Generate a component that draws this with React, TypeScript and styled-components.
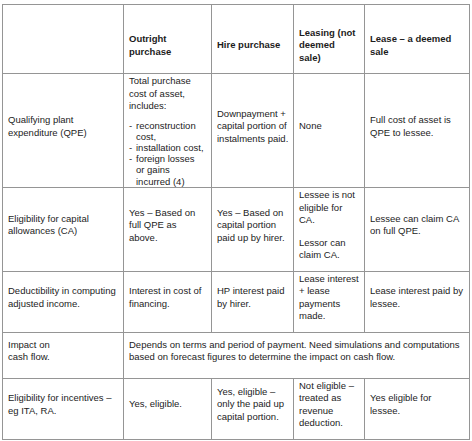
import styled, { createGlobalStyle } from "styled-components";
import type { ReactNode } from "react";

const Global = createGlobalStyle`
    html, body {
        margin: 0;
        padding: 0;
        background: #ffffff;
    }
    body {
        font-family: "Liberation Sans", Arial, sans-serif;
        color: #1c1c1c;
    }
`;

const Page = styled.div`
    padding: 4px 0 0 2px;
`;

const Table = styled.table`
    width: 467px;
    table-layout: fixed;
    border-collapse: collapse;
    font-size: 9.5px;
    line-height: 12.5px;
    white-space: nowrap;
`;

const Row = styled.tr<{ $h: number }>`
    height: ${(p) => p.$h}px;
`;

const HeadCell = styled.th`
    border: 1px solid #959595;
    padding: 14px 5px 1px;
    text-align: left;
    vertical-align: middle;
    font-weight: 700;
`;

const Cell = styled.td<{ $top?: boolean }>`
    border: 1px solid #959595;
    padding: ${(p) => (p.$top ? "1px 5px 0" : "1px 5px 9px")};
    vertical-align: ${(p) => (p.$top ? "top" : "middle")};
`;

const Para = styled.p<{ $gap?: number }>`
    margin: 0 0 ${(p) => p.$gap ?? 0}px;
`;

const DashList = styled.ul`
    list-style: none;
    margin: 0;
    padding: 0;
    line-height: 11.2px;
`;

const DashItem = styled.li`
    display: flex;
    gap: 4px;

    &::before {
        content: "-";
        width: 3px;
        flex: none;
    }
`;

const lines = (...parts: string[]): ReactNode =>
    parts.map((t, i) => (
        <span key={i}>
            {i > 0 && <br />}
            {t}
        </span>
    ));

const widths = [121, 88, 82, 71, 105];

export default function App() {
    return (
        <Page>
            <Global />
            <Table>
                <colgroup>
                    {widths.map((w, i) => (
                        <col key={i} style={{ width: w }} />
                    ))}
                </colgroup>
                <tbody>
                    <Row $h={69}>
                        <HeadCell />
                        <HeadCell>{lines("Outright", "purchase")}</HeadCell>
                        <HeadCell>Hire purchase</HeadCell>
                        <HeadCell>{lines("Leasing (not", "deemed", "sale)")}</HeadCell>
                        <HeadCell>{lines("Lease – a deemed", "sale")}</HeadCell>
                    </Row>
                    <Row $h={114}>
                        <Cell>{lines("Qualifying plant", "expenditure (QPE)")}</Cell>
                        <Cell $top>
                            <Para $gap={7}>{lines("Total purchase", "cost of asset,", "includes:")}</Para>
                            <DashList>
                                <DashItem>
                                    <span>{lines("reconstruction", "cost,")}</span>
                                </DashItem>
                                <DashItem>
                                    <span>installation cost,</span>
                                </DashItem>
                                <DashItem>
                                    <span>{lines("foreign losses", "or gains", "incurred (4)")}</span>
                                </DashItem>
                            </DashList>
                        </Cell>
                        <Cell>{lines("Downpayment +", "capital portion of", "instalments paid.")}</Cell>
                        <Cell>None</Cell>
                        <Cell>{lines("Full cost of asset is", "QPE to lessee.")}</Cell>
                    </Row>
                    <Row $h={81}>
                        <Cell>{lines("Eligibility for capital", "allowances (CA)")}</Cell>
                        <Cell>{lines("Yes – Based on", "full QPE as", "above.")}</Cell>
                        <Cell>{lines("Yes – Based on", "capital portion", "paid up by hirer.")}</Cell>
                        <Cell>
                            <Para $gap={10}>{lines("Lessee is not", "eligible for", "CA.")}</Para>
                            <Para>{lines("Lessor can", "claim CA.")}</Para>
                        </Cell>
                        <Cell>{lines("Lessee can claim CA", "on full QPE.")}</Cell>
                    </Row>
                    <Row $h={60}>
                        <Cell>{lines("Deductibility in computing", "adjusted income.")}</Cell>
                        <Cell>{lines("Interest in cost of", "financing.")}</Cell>
                        <Cell>{lines("HP interest paid", "by hirer.")}</Cell>
                        <Cell>{lines("Lease interest", "+ lease", "payments", "made.")}</Cell>
                        <Cell>{lines("Lease interest paid by", "lessee.")}</Cell>
                    </Row>
                    <Row $h={46}>
                        <Cell>{lines("Impact on", "cash flow.")}</Cell>
                        <Cell colSpan={4}>
                            {lines(
                                "Depends on terms and period of payment. Need simulations and computations",
                                "based on forecast figures to determine the impact on cash flow."
                            )}
                        </Cell>
                    </Row>
                    <Row $h={59}>
                        <Cell>{lines("Eligibility for incentives –", "eg ITA, RA.")}</Cell>
                        <Cell>Yes, eligible.</Cell>
                        <Cell>{lines("Yes, eligible –", "only the paid up", "capital portion.")}</Cell>
                        <Cell>{lines("Not eligible –", "treated as", "revenue", "deduction.")}</Cell>
                        <Cell>{lines("Yes eligible for", "lessee.")}</Cell>
                    </Row>
                </tbody>
            </Table>
        </Page>
    );
}
